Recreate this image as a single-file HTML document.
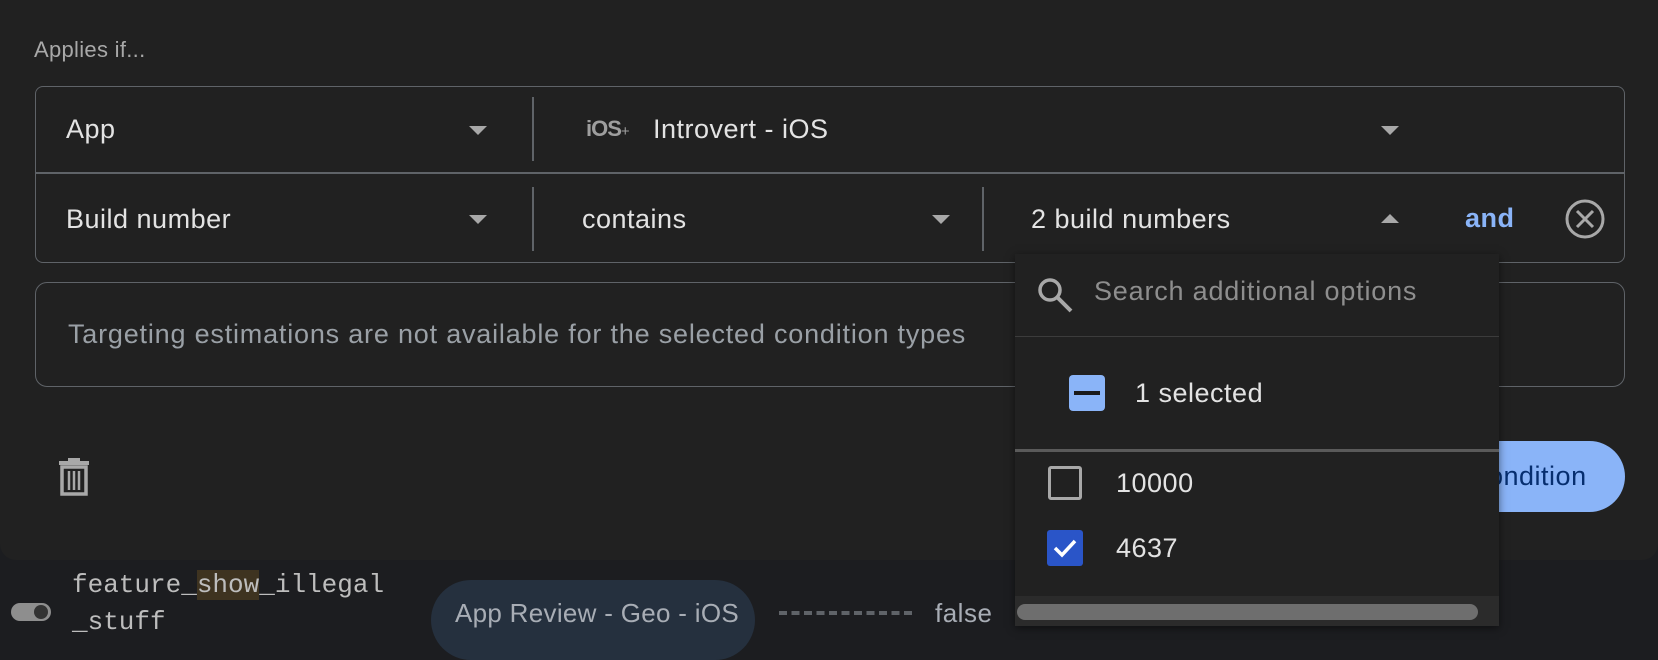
<!DOCTYPE html>
<html><head><meta charset="utf-8"><style>
*{margin:0;padding:0;box-sizing:border-box}
body{width:1658px;height:636px;overflow:hidden;background:#1c1d20;font-family:"Liberation Sans",Arial,sans-serif;color:#e3e3e3;position:relative}
.a{position:absolute}
.dlg{left:0;top:0;width:1658px;height:560px;background:#212121;border-radius:0 0 16px 16px}
.t{font-size:27px;line-height:30px;white-space:nowrap;letter-spacing:0.5px}
.arr{width:0;height:0;border-left:9px solid transparent;border-right:9px solid transparent;border-top:9px solid #a8a8a8}
.up{width:0;height:0;border-left:9px solid transparent;border-right:9px solid transparent;border-bottom:9px solid #a8a8a8}
.vd{width:2px;background:#5f6368}
</style></head><body>
<div class="a dlg"></div>
<div class="a" style="left:34px;top:37px;font-size:22px;color:#a8a8a8;letter-spacing:0.3px">Applies if...</div>
<div class="a" style="left:35px;top:86px;width:1590px;height:177px;border:1.5px solid #5f6368;border-radius:8px"></div>
<div class="a" style="left:35px;top:172px;width:1590px;height:2px;background:#5f6368"></div>
<div class="a t" style="left:66px;top:114px">App</div>
<div class="a arr" style="left:469px;top:126px"></div>
<div class="a vd" style="left:532px;top:97px;height:64px"></div>
<div class="a" style="left:586px;top:116px;font-size:22px;font-weight:bold;color:#9e9e9e;letter-spacing:-1px">iOS<span style="font-size:15px;font-weight:normal">+</span></div>
<div class="a t" style="left:653px;top:114px">Introvert - iOS</div>
<div class="a arr" style="left:1381px;top:126px"></div>
<div class="a t" style="left:66px;top:204px">Build number</div>
<div class="a arr" style="left:469px;top:215px"></div>
<div class="a vd" style="left:532px;top:187px;height:64px"></div>
<div class="a t" style="left:582px;top:204px">contains</div>
<div class="a arr" style="left:932px;top:215px"></div>
<div class="a vd" style="left:982px;top:187px;height:64px"></div>
<div class="a t" style="left:1031px;top:204px">2 build numbers</div>
<div class="a up" style="left:1381px;top:214px"></div>
<div class="a t" style="left:1465px;top:203px;color:#8ab4f8;font-weight:bold">and</div>
<svg class="a" style="left:1564px;top:198px" width="42" height="42" viewBox="0 0 42 42"><circle cx="21" cy="21" r="18" fill="none" stroke="#a8a8a8" stroke-width="3"/><path d="M13 13L29 29M29 13L13 29" stroke="#a8a8a8" stroke-width="3"/></svg>
<div class="a" style="left:35px;top:282px;width:1590px;height:105px;border:1.5px solid #5f6368;border-radius:12px"></div>
<div class="a t" style="left:68px;top:319px;color:#9aa0a6;font-size:27px;letter-spacing:0.8px">Targeting estimations are not available for the selected condition types</div>
<svg class="a" style="left:56px;top:456px" width="36" height="40" viewBox="0 0 36 40"><path d="M12 2h12v3h9v4H3V5h9z" fill="#a8a8a8"/><path d="M6 11h24v27H6z" fill="none" stroke="#a8a8a8" stroke-width="3.5"/><path d="M13 15v19M18 15v19M23 15v19" stroke="#a8a8a8" stroke-width="2.5"/></svg>
<div class="a" style="left:1300px;top:441px;width:325px;height:71px;background:#8ab4f8;border-radius:36px"></div>
<div class="a t" style="left:1488px;top:461px;color:#062e6f;font-size:27px">ondition</div>
<!-- bottom row -->
<div class="a" style="left:11px;top:603px;width:40px;height:18px;background:#8e8e8e;border-radius:9px"></div>
<div class="a" style="left:34px;top:605px;width:14px;height:14px;background:#333;border-radius:7px"></div>
<div class="a" style="left:72px;top:567px;font-family:'Liberation Mono',monospace;font-size:26px;color:#bdbdbd;line-height:37px">feature_<span style="background:#3e3320">show</span>_illegal<br>_stuff</div>
<div class="a" style="left:431px;top:580px;width:324px;height:80px;background:#25303e;border-radius:40px"></div>
<div class="a t" style="left:455px;top:598px;color:#a8adb5;font-size:26px;letter-spacing:0.3px">App Review - Geo - iOS</div>
<div class="a" style="left:779px;top:611px;width:133px;border-top:4px dashed #5f6368"></div>
<div class="a t" style="left:935px;top:598px;color:#a8adb5;font-size:26px">false</div>
<!-- dropdown -->
<div class="a" style="left:1015px;top:254px;width:484px;height:372px;background:#212121;box-shadow:0 2px 8px rgba(0,0,0,.5)"></div>
<svg class="a" style="left:1036px;top:276px" width="38" height="38" viewBox="0 0 38 38"><circle cx="14" cy="14" r="10" fill="none" stroke="#a8a8a8" stroke-width="3.5"/><path d="M21 21L35 35" stroke="#a8a8a8" stroke-width="4"/></svg>
<div class="a t" style="left:1094px;top:276px;color:#8e8e8e;letter-spacing:0.8px">Search additional options</div>
<div class="a" style="left:1015px;top:336px;width:484px;height:1px;background:#3c3c3c"></div>
<div class="a" style="left:1069px;top:375px;width:36px;height:36px;background:#8ab4f8;border-radius:4px"></div>
<div class="a" style="left:1074px;top:391px;width:26px;height:4px;background:#1a1a1a"></div>
<div class="a t" style="left:1135px;top:378px">1 selected</div>
<div class="a" style="left:1015px;top:449px;width:484px;height:3px;background:#5a5a5a"></div>
<div class="a" style="left:1048px;top:466px;width:34px;height:34px;border:3px solid #a8a8a8;border-radius:3px"></div>
<div class="a t" style="left:1116px;top:468px">10000</div>
<div class="a" style="left:1047px;top:530px;width:36px;height:36px;background:#2a55c8;border-radius:3px"></div>
<svg class="a" style="left:1047px;top:530px" width="36" height="36" viewBox="0 0 36 36"><path d="M8 18l7 7 13-14" fill="none" stroke="#fff" stroke-width="3.5"/></svg>
<div class="a t" style="left:1116px;top:533px">4637</div>
<div class="a" style="left:1015px;top:596px;width:484px;height:30px;background:#2b2b2b"></div>
<div class="a" style="left:1017px;top:604px;width:461px;height:16px;background:#6e6e6e;border-radius:8px"></div>
</body></html>
